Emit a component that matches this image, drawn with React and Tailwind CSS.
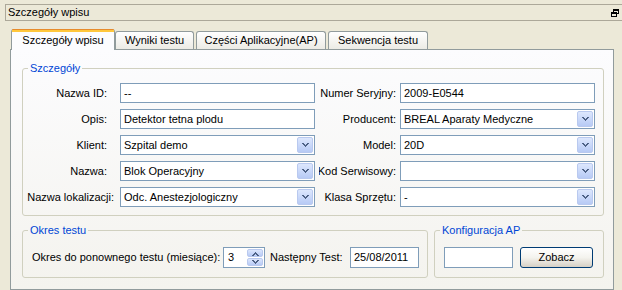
import React from 'react';

const Chevron = () => (
    <svg width="7" height="5" viewBox="0 0 7 5" shapeRendering="crispEdges">
        <path d="M0 0h2v1h1v1h1v-1h1v-1h2v1h-1v1h-1v1h-1v1h-1v-1h-1v-1h-1v-1h-1z" fill="#4d6185" />
    </svg>
);

const RestoreIcon = () => (
    <svg width="8" height="8" viewBox="0 0 8 8" shapeRendering="crispEdges" fill="#000">
        <rect x="2" y="0" width="6" height="2" />
        <rect x="7" y="2" width="1" height="3" />
        <rect x="6" y="4" width="2" height="1" />
        <rect x="2" y="2" width="1" height="1" />
        <rect x="0" y="3" width="6" height="2" />
        <rect x="0" y="5" width="1" height="3" />
        <rect x="5" y="5" width="1" height="3" />
        <rect x="0" y="7" width="6" height="1" />
    </svg>
);

const TextBox = ({ value, className = 'w-[195px] h-[20px]' }) => (
    <div className={`flex items-center border border-[#7f9db9] bg-white pl-[3px] whitespace-nowrap overflow-hidden ${className}`}>
        {value}
    </div>
);

const Combo = ({ value }) => (
    <div className="flex h-[20px] w-[195px] items-center border border-[#7f9db9] bg-white p-px">
        <span className="flex-1 truncate pl-[2px]">{value}</span>
        <span className="flex h-full w-[16px] items-center justify-center rounded-[2px] border border-[#b9c9ef] bg-gradient-to-b from-[#dde7fd] to-[#b7caf5]">
            <Chevron />
        </span>
    </div>
);

const Row = ({ left, leftField, right, rightField, wideLeft }) => (
    <div className="flex h-[20px] items-center">
        <div className={`flex w-[97px] justify-end whitespace-nowrap ${wideLeft ? 'pr-[6px]' : 'pr-[13px]'}`}>{left}</div>
        {leftField}
        <div className="ml-[4px] flex w-[77px] justify-end overflow-hidden whitespace-nowrap">{right}</div>
        <div className="ml-[4px]">{rightField}</div>
    </div>
);

const Tab = ({ label, width, active }) =>
    active ? (
        <div className={`relative z-10 -mx-[2px] -mb-px flex h-[21px] flex-col rounded-t-[3px] border-x border-[#919b9c] bg-[#fcfcfe] ${width}`}>
            <div className="h-[1px] rounded-t-[3px] bg-[#e68b2c]" />
            <div className="h-[2px] bg-[#ffc73c]" />
            <div className="flex flex-1 items-center justify-center pb-[1px]">{label}</div>
        </div>
    ) : (
        <div className={`flex h-[18px] items-center justify-center rounded-t-[3px] border-x border-t border-[#919b9c] bg-gradient-to-b from-white to-[#ecebe5] ${width}`}>
            {label}
        </div>
    );

const App = () => {
    return (
        <div className="flex h-[290px] w-[622px] flex-col overflow-hidden bg-[#ece9d8] font-['Liberation_Sans',Arial,sans-serif] text-[11px] leading-[13px] text-black">
            <div className="ml-[5px] mt-[4px] flex h-[17px] items-center justify-between border-y border-l border-[#aca899] pl-[2px] pr-[3px]">
                <span>Szczegóły wpisu</span>
                <RestoreIcon />
            </div>

            <div className="ml-[10px] mt-[8px] flex h-[20px] items-end gap-[2px] pl-[3px]">
                <Tab label="Szczegóły wpisu" width="w-[104px]" active />
                <Tab label="Wyniki testu" width="w-[79px]" />
                <Tab label="Części Aplikacyjne(AP)" width="w-[130px]" />
                <Tab label="Sekwencja testu" width="w-[100px]" />
            </div>

            <div className="ml-[10px] w-[604px] flex-1 border border-[#919b9c] bg-gradient-to-b from-[#fcfcfe] to-[#f4f3ee] pl-[11px] pt-[12px]">
                <fieldset className="w-[582px] rounded-[3px] border border-[#d0d0bf] px-0 pb-[8px] pt-[8px]">
                    <legend className="ml-[5px] px-[2px] text-[#0046d5]">Szczegóły</legend>
                    <div className="flex flex-col gap-[6px]">
                        <Row left="Nazwa ID:" leftField={<TextBox value="--" />} right="Numer Seryjny:" rightField={<TextBox value="2009-E0544" />} />
                        <Row left="Opis:" leftField={<TextBox value="Detektor tetna plodu" />} right="Producent:" rightField={<Combo value="BREAL Aparaty Medyczne" />} />
                        <Row left="Klient:" leftField={<Combo value="Szpital demo" />} right="Model:" rightField={<Combo value="20D" />} />
                        <Row left="Nazwa:" leftField={<Combo value="Blok Operacyjny" />} right="Kod Serwisowy:" rightField={<Combo value="" />} />
                        <Row left="Nazwa lokalizacji:" wideLeft leftField={<Combo value="Odc. Anestezjologiczny" />} right="Klasa Sprzętu:" rightField={<Combo value="-" />} />
                    </div>
                </fieldset>

                <div className="mt-[8px] flex gap-[6px]">
                    <fieldset className="w-[406px] rounded-[3px] border border-[#d0d0bf] px-0 pb-[9px] pt-[10px]">
                        <legend className="ml-[5px] px-[2px] text-[#0046d5]">Okres testu</legend>
                        <div className="flex h-[21px] items-center pl-[9px]">
                            <div className="w-[191px] whitespace-nowrap">Okres do ponownego testu (miesiące):</div>
                            <div className="flex h-[21px] w-[42px] items-center border border-[#7f9db9] bg-white p-px">
                                <span className="flex-1 pl-[3px]">3</span>
                                <div className="flex h-full w-[16px] flex-col gap-px">
                                    <span className="flex flex-1 items-center justify-center rounded-[2px] border border-[#b9c9ef] bg-gradient-to-b from-[#dde7fd] to-[#b7caf5]">
                                        <span className="rotate-180"><Chevron /></span>
                                    </span>
                                    <span className="flex flex-1 items-center justify-center rounded-[2px] border border-[#b9c9ef] bg-gradient-to-b from-[#dde7fd] to-[#b7caf5]">
                                        <Chevron />
                                    </span>
                                </div>
                            </div>
                            <div className="ml-[5px] w-[80px] whitespace-nowrap">Następny Test:</div>
                            <TextBox value="25/08/2011" className="h-[21px] w-[69px]" />
                        </div>
                    </fieldset>

                    <fieldset className="w-[170px] rounded-[3px] border border-[#d0d0bf] px-0 pb-[9px] pt-[10px]">
                        <legend className="ml-[5px] px-[2px] text-[#0046d5]">Konfiguracja AP</legend>
                        <div className="flex h-[21px] items-center pl-[9px]">
                            <TextBox value="" className="h-[21px] w-[69px]" />
                            <button className="ml-[7px] flex h-[21px] w-[73px] items-center justify-center rounded-[3px] border border-[#003c74] bg-gradient-to-b from-white via-[#f4f3ee] to-[#d6d0c5]">
                                Zobacz
                            </button>
                        </div>
                    </fieldset>
                </div>
            </div>
        </div>
    );
};

export default App;
